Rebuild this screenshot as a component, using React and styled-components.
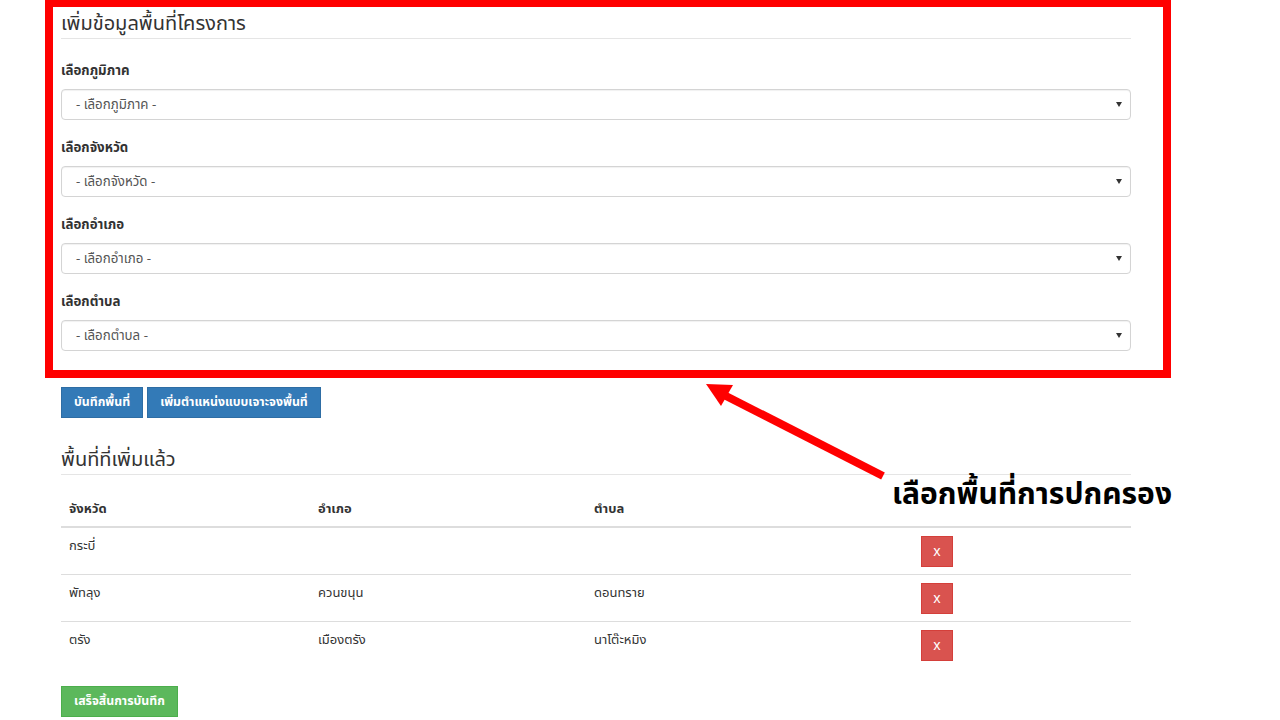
import React from "react";
import styled, { createGlobalStyle } from "styled-components";

const Global = createGlobalStyle`
  html, body { margin: 0; padding: 0; background: #fff; }
  body {
    font-family: "Noto Sans Thai", "Tahoma", "Noto Sans", "DejaVu Sans", sans-serif;
    color: #333;
    font-size: 13px;
  }
  * { box-sizing: border-box; }
`;

const Page = styled.div`
  position: relative;
  width: 1280px;
  height: 720px;
  overflow: hidden;
`;

const Container = styled.div`
  width: 1070px;
  margin-left: 61px;
  padding-top: 10px;
  display: flex;
  flex-direction: column;
`;

const Heading = styled.div`
  font-size: 20px;
  line-height: 28px;
  color: #333;
  border-bottom: 1px solid #e5e5e5;
  margin-top: ${(p) => p.$mt || 0}px;
`;

const Form = styled.div`
  display: flex;
  flex-direction: column;
  gap: 18px;
  margin-top: 22px;
`;

const Group = styled.div`
  display: flex;
  flex-direction: column;
  gap: 8px;
`;

const Label = styled.div`
  font-weight: 700;
  font-size: 13.3px;
  line-height: 20px;
  color: #333;
`;

const Select = styled.div`
  height: 31px;
  border: 1px solid #d4d4d4;
  border-radius: 4px;
  box-shadow: inset 0 1px 1px rgba(0, 0, 0, 0.06);
  display: flex;
  align-items: center;
  justify-content: space-between;
  padding: 0 6px 0 14px;
  font-size: 13.3px;
  color: #555;
`;

const Caret = styled.span`
  width: 0;
  height: 0;
  border-left: 3px solid transparent;
  border-right: 3px solid transparent;
  border-top: 5px solid #333;
  margin-right: 2px;
`;

const ButtonRow = styled.div`
  display: flex;
  gap: 4px;
  margin-top: 36px;
`;

const Btn = styled.button`
  height: 31px;
  padding: 0 12px;
  border: 1px solid ${(p) => (p.$variant === "success" ? "#4cae4c" : p.$variant === "danger" ? "#d43f3a" : "#2e6da4")};
  background: ${(p) => (p.$variant === "success" ? "#5cb85c" : p.$variant === "danger" ? "#d9534f" : "#337ab7")};
  color: #fff;
  font-family: inherit;
  font-size: 12.3px;
  font-weight: ${(p) => (p.$variant === "danger" ? 400 : 700)};
  border-radius: 0;
  cursor: pointer;
  display: inline-flex;
  align-items: center;
  justify-content: center;
`;

const DelBtn = styled(Btn)`
  width: 32px;
  padding: 0;
  font-size: 14px;
`;

const Table = styled.table`
  width: 100%;
  border-collapse: collapse;
  margin-top: 16px;
  table-layout: fixed;
`;

const Th = styled.th`
  text-align: left;
  font-weight: 700;
  font-size: 13px;
  line-height: 18px;
  padding: 9px 8px 8px;
  border-bottom: 2px solid #ddd;
  width: ${(p) => p.$w}px;
`;

const Td = styled.td`
  font-size: 13px;
  line-height: 20px;
  padding: 8px 8px 7px;
  vertical-align: top;
  border-top: ${(p) => (p.$first ? "none" : "1px solid #ddd")};
`;

const Footer = styled.div`
  margin-top: 18px;
`;

const RedBox = styled.div`
  position: absolute;
  left: 45px;
  top: -1px;
  width: 1126px;
  height: 379px;
  border: 8px solid #ff0000;
  pointer-events: none;
`;

const Annotation = styled.div`
  position: absolute;
  left: 892px;
  top: 475px;
  font-size: 30px;
  font-weight: 700;
  color: #000;
  line-height: 40px;
  white-space: nowrap;
`;

const ArrowSvg = styled.svg`
  position: absolute;
  left: 700px;
  top: 378px;
`;

const selects = [
  ["เลือกภูมิภาค", "- เลือกภูมิภาค -"],
  ["เลือกจังหวัด", "- เลือกจังหวัด -"],
  ["เลือกอำเภอ", "- เลือกอำเภอ -"],
  ["เลือกตำบล", "- เลือกตำบล -"],
];

const rows = [
  ["กระบี่", "", ""],
  ["พัทลุง", "ควนขนุน", "ดอนทราย"],
  ["ตรัง", "เมืองตรัง", "นาโต๊ะหมิง"],
];

export default function App() {
  return (
    <Page>
      <Global />
      <Container>
        <Heading>เพิ่มข้อมูลพื้นที่โครงการ</Heading>
        <Form>
          {selects.map(([label, ph]) => (
            <Group key={label}>
              <Label>{label}</Label>
              <Select>
                <span>{ph}</span>
                <Caret />
              </Select>
            </Group>
          ))}
        </Form>
        <ButtonRow>
          <Btn>บันทึกพื้นที่</Btn>
          <Btn>เพิ่มตำแหน่งแบบเจาะจงพื้นที่</Btn>
        </ButtonRow>
        <Heading $mt={28}>พื้นที่ที่เพิ่มแล้ว</Heading>
        <Table>
          <thead>
            <tr>
              <Th $w={249}>จังหวัด</Th>
              <Th $w={276}>อำเภอ</Th>
              <Th $w={327}>ตำบล</Th>
              <Th $w={218}></Th>
            </tr>
          </thead>
          <tbody>
            {rows.map((r, i) => (
              <tr key={i}>
                <Td $first={i === 0}>{r[0]}</Td>
                <Td $first={i === 0}>{r[1]}</Td>
                <Td $first={i === 0}>{r[2]}</Td>
                <Td $first={i === 0}>
                  <DelBtn $variant="danger">x</DelBtn>
                </Td>
              </tr>
            ))}
          </tbody>
        </Table>
        <Footer>
          <Btn $variant="success">เสร็จสิ้นการบันทึก</Btn>
        </Footer>
      </Container>
      <RedBox />
      <ArrowSvg width="200" height="110" viewBox="0 0 200 110">
        <line x1="183" y1="98" x2="24" y2="17" stroke="#ff0000" strokeWidth="8" />
        <polygon points="6,6 33,7 21,28" fill="#ff0000" />
      </ArrowSvg>
      <Annotation>เลือกพื้นที่การปกครอง</Annotation>
    </Page>
  );
}
